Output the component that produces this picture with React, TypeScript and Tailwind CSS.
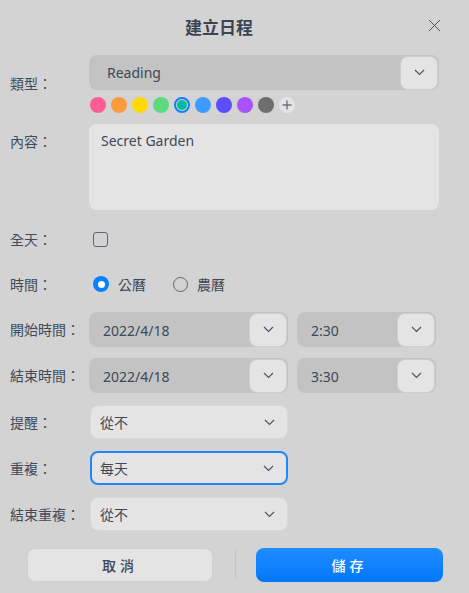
import React from "react";

const font = { fontFamily: '"Noto Sans", "Noto Sans CJK TC", sans-serif' };

const Chevron = () => (
  <svg width="11" height="7" viewBox="0 0 11 7" fill="none">
    <path d="M1 1l4.5 4.5L10 1" stroke="#4b5563" strokeWidth="1.2" />
  </svg>
);

const Label = ({ text }: { text: string }) => (
  <div className="w-[89px] shrink-0 whitespace-nowrap pl-[10px] text-[14px] text-[#414b59]">{text}</div>
);

const ComboField = ({ value, width }: { value: string; width: string }) => (
  <div className={`flex h-[35px] items-center rounded-lg bg-[#c3c3c3] ${width}`}>
    <span className="flex-1 pl-[14px] pt-[2px] text-[14px] text-[#3e4856]">{value}</span>
    <button className="mr-[1px] flex h-[34px] w-[38px] items-center justify-center rounded-lg border border-[#cdcdcd] bg-[#e4e4e4]">
      <Chevron />
    </button>
  </div>
);

const Select = ({ value, focused }: { value: string; focused?: boolean }) => (
  <div
    className={`flex h-[34px] w-[198px] items-center justify-between rounded-lg bg-[#e4e4e4] pr-[12px] ${
      focused ? "border-2 border-[#1e86ff] pl-[8px]" : "border border-[#d8d8d8] pl-[9px]"
    }`}
  >
    <span className="text-[14px] text-[#3e4856]">{value}</span>
    <Chevron />
  </div>
);

const colors = ["#ff5c93", "#ff9a3b", "#ffd900", "#5cdb7e", "#00bb9a", "#3d9bff", "#5c4dff", "#a951ff", "#6e6e6e"];

export default function App() {
  return (
    <div className="h-[593px] w-[469px] bg-[#d3d3d3] text-[#414b59]" style={font}>
      <div className="flex h-[55px] items-center">
        <div className="flex-1 pl-[10px] text-center text-[17px] font-bold text-[#3a4453]">建立日程</div>
        <button className="flex w-[41px] items-center justify-start pb-[4px]">
          <svg width="13" height="13" viewBox="0 0 13 13" fill="none">
            <path d="M1 1l11 11M12 1L1 12" stroke="#4b5563" strokeWidth="1" />
          </svg>
        </button>
      </div>

      <div className="flex items-start">
        <div className="pt-[18px]">
          <Label text="類型：" />
        </div>
        <div className="flex flex-col">
          <div className="flex h-[35px] w-[350px] items-center rounded-lg bg-[#c3c3c3]">
            <span className="flex-1 pl-[18px] text-[14px] text-[#3e4856]">Reading</span>
            <button className="mr-[1px] flex h-[34px] w-[38px] items-center justify-center rounded-lg border border-[#cdcdcd] bg-[#e4e4e4]">
              <Chevron />
            </button>
          </div>
          <div className="mt-[7px] flex items-center gap-[5px] pl-[1px]">
            {colors.map((c, i) =>
              i === 4 ? (
                <div key={c} className="flex h-[16px] w-[16px] items-center justify-center rounded-full border-2 border-[#0a80ff]">
                  <div className="h-[10px] w-[10px] rounded-full" style={{ background: c }} />
                </div>
              ) : (
                <div key={c} className="h-[16px] w-[16px] rounded-full" style={{ background: c }} />
              )
            )}
            <div className="flex h-[16px] w-[16px] items-center justify-center rounded-full bg-[#e4e4e4]">
              <svg width="10" height="10" viewBox="0 0 10 10" fill="none">
                <path d="M5 0.5v9M0.5 5h9" stroke="#6b7280" strokeWidth="1.4" />
              </svg>
            </div>
          </div>
        </div>
      </div>

      <div className="mt-[11px] flex items-start">
        <div className="pt-[7px]">
          <Label text="內容：" />
        </div>
        <div className="h-[86px] w-[350px] rounded-lg bg-[#e4e4e4] px-[12px] pt-[6px] text-[14px] text-[#3e4856]">
          Secret Garden
        </div>
      </div>

      <div className="mt-[20px] flex h-[18px] items-center">
        <Label text="全天：" />
        <div className="ml-[4px] h-[15px] w-[15px] rounded-[3px] border-[1.5px] border-[#5d6674]" />
      </div>

      <div className="mt-[27px] flex h-[18px] items-center">
        <Label text="時間：" />
        <div className="ml-[4px] flex items-center">
          <div className="flex h-[16px] w-[16px] items-center justify-center rounded-full bg-[#0a80ff]">
            <div className="h-[7px] w-[7px] rounded-full bg-white" />
          </div>
          <span className="ml-[9px] text-[14px] text-[#3e4856]">公曆</span>
          <div className="ml-[27px] h-[15px] w-[15px] rounded-full border border-[#5d6674]" />
          <span className="ml-[9px] text-[14px] text-[#3e4856]">農曆</span>
        </div>
      </div>

      <div className="mt-[19px] flex items-center">
        <Label text="開始時間：" />
        <div className="flex gap-[9px]">
          <ComboField value="2022/4/18" width="w-[199px]" />
          <ComboField value="2:30" width="w-[139px]" />
        </div>
      </div>

      <div className="mt-[11px] flex items-center">
        <Label text="結束時間：" />
        <div className="flex gap-[9px]">
          <ComboField value="2022/4/18" width="w-[199px]" />
          <ComboField value="3:30" width="w-[139px]" />
        </div>
      </div>

      <div className="mt-[12px] flex items-center">
        <Label text="提醒：" />
        <div className="ml-[1px]">
          <Select value="從不" />
        </div>
      </div>

      <div className="mt-[12px] flex items-center">
        <Label text="重複：" />
        <div className="ml-[1px]">
          <Select value="每天" focused />
        </div>
      </div>

      <div className="mt-[12px] flex items-center">
        <Label text="結束重複：" />
        <div className="ml-[1px]">
          <Select value="從不" />
        </div>
      </div>

      <div className="mt-[17px] flex items-center pl-[27px]">
        <button className="h-[34px] w-[186px] rounded-lg border border-[#d0d0d0] bg-[#e4e4e4] text-[14px] font-medium tracking-[4px] text-[#3e4856]">
          取消
        </button>
        <div className="ml-[22px] mr-[20px] h-[30px] w-px bg-[#c4c4c4]" />
        <button className="h-[34px] w-[187px] rounded-lg bg-gradient-to-b from-[#1f8cff] to-[#0078fa] text-[14px] font-medium tracking-[4px] text-white">
          儲存
        </button>
      </div>
    </div>
  );
}
